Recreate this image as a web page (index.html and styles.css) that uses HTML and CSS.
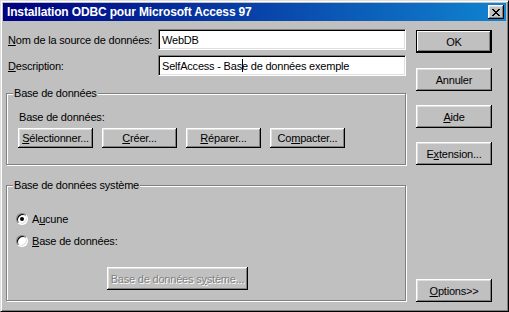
FILE: index.html
```html
<!DOCTYPE html>
<html lang="fr">
<head>
    <meta charset="UTF-8">
    <title>Installation ODBC pour Microsoft Access 97</title>
    <link rel="stylesheet" href="styles.css">
</head>
<body>
    <div class="window">
        <div class="titlebar">
            <span class="title">Installation ODBC pour Microsoft Access 97</span>
            <span class="close">
                <svg width="8" height="7" viewBox="0 0 8 7"><path d="M0 0h2v1H0zM6 0h2v1H6zM1 1h2v1H1zM5 1h2v1H5zM2 2h4v1H2zM3 3h2v1H3zM2 4h4v1H2zM1 5h2v1H1zM5 5h2v1H5zM0 6h2v1H0zM6 6h2v1H6z" fill="#000"/></svg>
            </span>
        </div>

        <div class="content">
            <div class="main">
                <div class="form">
                    <label class="label"><u>N</u>om de la source de données:</label>
                    <div class="field">WebDB</div>
                    <label class="label"><u>D</u>escription:</label>
                    <div class="field">SelfAccess - Bas<span class="caret"></span>e de données exemple</div>
                </div>

                <div class="group group-db">
                    <div class="group-title">Base de données</div>
                    <div class="group-label">Base de données:</div>
                    <div class="button-row">
                        <button class="btn btn-small"><u>S</u>électionner...</button>
                        <button class="btn btn-small"><u>C</u>réer...</button>
                        <button class="btn btn-small"><u>R</u>éparer...</button>
                        <button class="btn btn-small">Co<u>m</u>pacter...</button>
                    </div>
                </div>

                <div class="group group-sys">
                    <div class="group-title">Base de données système</div>
                    <div class="radio-row first">
                        <span class="radio checked"></span>
                        <span>A<u>u</u>cune</span>
                    </div>
                    <div class="radio-row">
                        <span class="radio"></span>
                        <span><u>B</u>ase de données:</span>
                    </div>
                    <button class="btn btn-sys" disabled>Base de données s<u>y</u>stème...</button>
                </div>
            </div>

            <div class="side">
                <button class="btn btn-default">OK</button>
                <button class="btn btn-cancel">Annuler</button>
                <button class="btn"><u>A</u>ide</button>
                <button class="btn">E<u>x</u>tension...</button>
                <button class="btn btn-options"><u>O</u>ptions&gt;&gt;</button>
            </div>
        </div>
    </div>
</body>
</html>
```

FILE: styles.css
```css
html, body {
    margin: 0;
    padding: 0;
}
body {
    font-family: "Liberation Sans", Arial, sans-serif;
    font-size: 11px;
    letter-spacing: -0.2px;
    color: #000;
    background: #c0c0c0;
}
u {
    text-decoration: underline;
    text-underline-offset: 1px;
}
.window {
    width: 509px;
    height: 312px;
    box-sizing: border-box;
    display: flex;
    flex-direction: column;
    background: #c0c0c0;
    border: 1px solid;
    border-color: #dfdfdf #000 #000 #dfdfdf;
    box-shadow: inset 1px 1px #fff, inset -1px -1px #808080;
    padding: 2px;
}
.titlebar {
    height: 18px;
    flex: none;
    display: flex;
    align-items: center;
    justify-content: space-between;
    padding: 0 2px 0 4px;
    background: linear-gradient(to right, #000080, #1084d0);
    color: #fff;
    font-weight: bold;
    font-size: 12px;
    letter-spacing: -0.15px;
}
.close {
    width: 16px;
    height: 14px;
    display: flex;
    align-items: center;
    justify-content: center;
    background: #c0c0c0;
    box-shadow: inset -1px -1px #000, inset 1px 1px #fff, inset -2px -2px #808080, inset 2px 2px #dfdfdf;
}
.content {
    flex: 1;
    display: flex;
    gap: 10px;
    padding: 8px 0 7px 3px;
}
.main {
    width: 400px;
    display: flex;
    flex-direction: column;
}
.form {
    display: grid;
    grid-template-columns: 152px 248px;
    grid-auto-rows: 21px;
    row-gap: 5px;
    align-items: center;
}
.label {
    padding-left: 2px;
}
.field {
    height: 21px;
    box-sizing: border-box;
    display: flex;
    align-items: center;
    padding-left: 3px;
    background: #fff;
    border: 1px solid;
    border-color: #808080 #fff #fff #808080;
    box-shadow: inset 1px 1px #000, inset -1px -1px #dfdfdf;
    white-space: pre;
}
.caret {
    display: inline-block;
    width: 1px;
    height: 13px;
    background: #000;
    margin-right: -1px;
}
.group {
    box-sizing: border-box;
    border: 1px solid #808080;
    box-shadow: inset 1px 1px #fff, 1px 1px #fff;
    display: flex;
    flex-direction: column;
    align-items: flex-start;
}
.group-title {
    line-height: 13px;
    margin: -7px 0 0 6px;
    padding: 0 1px;
    background: #c0c0c0;
}
.group-db {
    height: 72px;
    margin-top: 17px;
}
.group-label {
    line-height: 13px;
    margin: 11px 0 0 12px;
}
.button-row {
    display: flex;
    gap: 9px;
    margin: 4px 0 0 11px;
}
.group-sys {
    height: 116px;
    margin-top: 20px;
}
.radio-row {
    display: flex;
    align-items: center;
    gap: 4px;
    height: 13px;
    margin: 9px 0 0 9px;
}
.radio-row.first {
    margin-top: 20px;
}
.radio {
    width: 12px;
    height: 12px;
    box-sizing: border-box;
    border-radius: 50%;
    border: 1px solid;
    border-color: #808080 #fff #fff #808080;
    box-shadow: inset 1px 1px #000, inset -1px -1px #dfdfdf;
    background: #fff;
    display: flex;
    align-items: center;
    justify-content: center;
}
.radio.checked::after {
    content: "";
    width: 4px;
    height: 4px;
    border-radius: 50%;
    background: #000;
}
.btn {
    font: inherit;
    letter-spacing: inherit;
    color: #000;
    width: 76px;
    height: 23px;
    padding: 0;
    border: none;
    background: #c0c0c0;
    box-shadow: inset -1px -1px #000, inset 1px 1px #fff, inset -2px -2px #808080, inset 2px 2px #dfdfdf;
}
.btn-small {
    width: 75px;
    height: 20px;
}
.btn-sys {
    width: 141px;
    margin: 20px 0 0 100px;
    color: #808080;
    text-shadow: 1px 1px #fff;
}
.side {
    width: 76px;
    display: flex;
    flex-direction: column;
    gap: 14px;
    padding-top: 1px;
}
.btn-default {
    box-shadow: inset 0 0 0 1px #000, inset -2px -2px #000, inset 2px 2px #fff, inset -3px -3px #808080;
}
.btn-cancel {
    margin-top: 1px;
}
.btn-options {
    margin-top: auto;
}
```
